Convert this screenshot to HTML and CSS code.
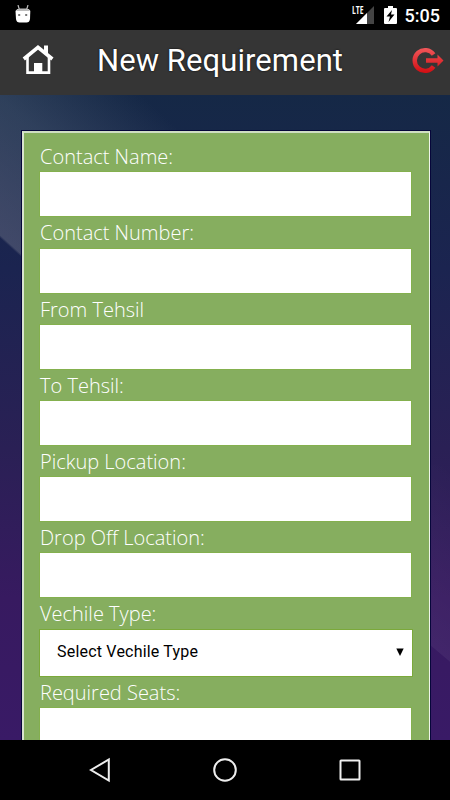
FILE: index.html
```html
<!DOCTYPE html>
<html lang="en">
<head>
  <meta charset="UTF-8">
  <meta name="viewport" content="width=device-width, initial-scale=1.0">
  <title>New Requirement</title>
  <link rel="stylesheet" href="styles.css">
</head>
<body>
  <div class="status-bar">
    <svg class="debug-icon" width="16" height="18" viewBox="0 0 16 18">
      <path d="M3 0l1.500 5M13 0l-1.500 5" stroke="#bbb" stroke-width="1.200"/>
      <path d="M.5 6Q1.500 3.800 5 3.800h6q3.500 0 4.300 2.200l-.3 8q-.5 3.500-3.500 3.500H4.500q-3 0-3.500-3.500z" fill="#fff"/>
      <path d="M1 6Q2 3.800 5 3.800h6q3 0 4 2.200z" fill="#bbb"/>
      <path d="M3.200 9h2v2h-2zM10.200 9h2v2h-2z" fill="#777"/>
    </svg>
    <div class="status-right">
      <span class="lte">LTE</span>
      <svg class="signal" width="18" height="18" viewBox="0 0 18 18">
        <path d="M18 0v18H0z" fill="#444"/>
        <path d="M11 7v11H0z" fill="#fff"/>
      </svg>
      <svg class="battery" width="13" height="18" viewBox="0 0 13 18">
        <path d="M4 0h5v2h3q1 0 1 1v14q0 1-1 1H1q-1 0-1-1V3q0-1 1-1h3z" fill="#fff"/>
        <path d="M8 4L2.500 10.500H6L4.500 16l6-7.500H7z" fill="#000"/>
      </svg>
      <span class="time">5:05</span>
    </div>
  </div>

  <header class="header">
    <svg class="home" width="34" height="32" viewBox="0 0 34 32">
      <path d="M23 1.500h4v9l-4-3.500z" fill="#fff"/>
      <path d="M6.500 13v15.600h21.500V13" fill="none" stroke="#fff" stroke-width="2.600"/>
      <path d="M2.800 15L17 3.400 31.400 15" fill="none" stroke="#fff" stroke-width="3.600"/>
      <path d="M13 19h8.300v10H13z" fill="#fff"/>
    </svg>
    <h1>New Requirement</h1>
    <svg class="logout" width="32" height="28" viewBox="0 0 32 28">
      <defs>
        <linearGradient id="red" gradientUnits="userSpaceOnUse" x1="0" y1="2" x2="0" y2="27">
          <stop offset="0" stop-color="#f0575a"/>
          <stop offset="1" stop-color="#d20d12"/>
        </linearGradient>
      </defs>
      <path d="M21.600 8.500A10.400 10.400 0 1 0 21.600 20.500" fill="none" stroke="url(#red)" stroke-width="4.400"/>
      <path d="M14 12.300h11.500V8.500l6 6-6 6v-3.800H14z" fill="url(#red)"/>
    </svg>
  </header>

  <main class="page">
    <form class="form">
      <label for="name">Contact Name:</label>
      <input type="text" id="name">

      <label for="number">Contact Number:</label>
      <input type="text" id="number">

      <label for="from">From Tehsil</label>
      <input type="text" id="from">

      <label for="to">To Tehsil:</label>
      <input type="text" id="to">

      <label for="pickup">Pickup Location:</label>
      <input type="text" id="pickup">

      <label for="drop">Drop Off Location:</label>
      <input type="text" id="drop">

      <label for="type">Vechile Type:</label>
      <div class="select-box">
        <select id="type">
          <option>Select Vechile Type</option>
        </select>
        <svg width="8" height="8" viewBox="0 0 8 8"><path d="M.3 .5h7.400L4 8z" fill="#000"/></svg>
      </div>

      <label for="seats">Required Seats:</label>
      <input type="text" id="seats">
    </form>
  </main>

  <nav class="nav-bar">
    <svg width="26" height="26" viewBox="0 0 26 26">
      <path d="M21.800 2.500v21L4 13z"/>
    </svg>
    <svg width="26" height="26" viewBox="0 0 26 26">
      <circle cx="13" cy="13" r="10.800"/>
    </svg>
    <svg width="26" height="26" viewBox="0 0 26 26">
      <rect x="3.500" y="3.500" width="19" height="19" rx=".5"/>
    </svg>
  </nav>
</body>
</html>
```
FILE: styles.css
```css
* {
  box-sizing: border-box;
}
body {
  display: flex;
  flex-direction: column;
  height: 800px;
  margin: 0;
  overflow: hidden;
  font-family: Roboto, sans-serif;
  background-color: #000;
}
.status-bar {
  display: flex;
  justify-content: space-between;
  height: 30px;
  padding: 6px 10px 0 15px;
  color: white;
}
.debug-icon {
  margin-top: -1px;
}
.status-right {
  display: flex;
}
.lte {
  width: 4px;
  font-family: "Open Sans", sans-serif;
  font-size: 10.5px;
  font-weight: bold;
  line-height: 9px;
  transform: scaleX(0.65);
  transform-origin: left;
}
.battery {
  margin: 0 8px 0 10px;
}
.time {
  font-size: 18px;
  font-weight: 500;
  line-height: 20px;
}
.header {
  display: flex;
  align-items: center;
  height: 65px;
  padding: 0 6px 5px 21px;
  background-color: #353535;
}
.header h1 {
  flex: 1;
  margin: 0;
  padding: 2px 0 0 42px;
  color: white;
  font-size: 31px;
  font-weight: normal;
  line-height: 60px;
  letter-spacing: 0.08px;
  text-shadow: 0 0 2px black;
  white-space: nowrap;
}
.page {
  flex: 1;
  min-height: 0;
  overflow: hidden;
  padding: 36px 20px 0 22px;
  background:
    linear-gradient(42deg, transparent 15%, rgba(110, 115, 135, 0.46) 15.8%, rgba(100, 115, 135, 0.32) 52%, transparent 86%) 0 0 / 200px 200px no-repeat,
    linear-gradient(40deg, transparent 9%, rgba(255, 255, 255, 0.05) 9.5%, transparent) right 370px / 20px 200px no-repeat,
    linear-gradient(180deg, #152846 0%, #1b2450 27%, #2a2055 55%, #371a60 78%, #391a66 100%);
}
.form {
  height: 700px;
  padding: 7.3px 16px 0;
  background-color: #86ae5f;
  border: 1px solid #f0f5eb;
  border-left: 2px solid #d9e4cf;
  border-top: 2px solid #cfdec2;
  box-shadow: 0 0 0 1px #06063a;
}
.form label {
  display: block;
  height: 32.2px;
  color: white;
  font-family: "Open Sans", sans-serif;
  font-size: 20px;
  font-weight: 300;
  line-height: 34px;
}
.form input {
  display: block;
  width: 371.4px;
  height: 44px;
  padding: 0 16px;
  background-color: white;
  border: none;
  box-shadow: 0 0 0 1px #84b04e;
}
.select-box {
  display: flex;
  align-items: center;
  width: 372.4px;
  height: 46.2px;
  padding: 0 8px 2px 17px;
  background-color: white;
  box-shadow: 0 0 0 1px #7ba93a;
}
.select-box select {
  flex: 1;
  appearance: none;
  padding: 0;
  border: none;
  background: none;
  color: black;
  font-family: Roboto, sans-serif;
  font-size: 16px;
  letter-spacing: 0.2px;
}
.nav-bar {
  display: flex;
  justify-content: space-between;
  align-items: center;
  height: 60px;
  padding: 0 87px;
  background-color: #000;
}
.nav-bar svg {
  fill: none;
  stroke: #eee;
  stroke-width: 2;
}
```
